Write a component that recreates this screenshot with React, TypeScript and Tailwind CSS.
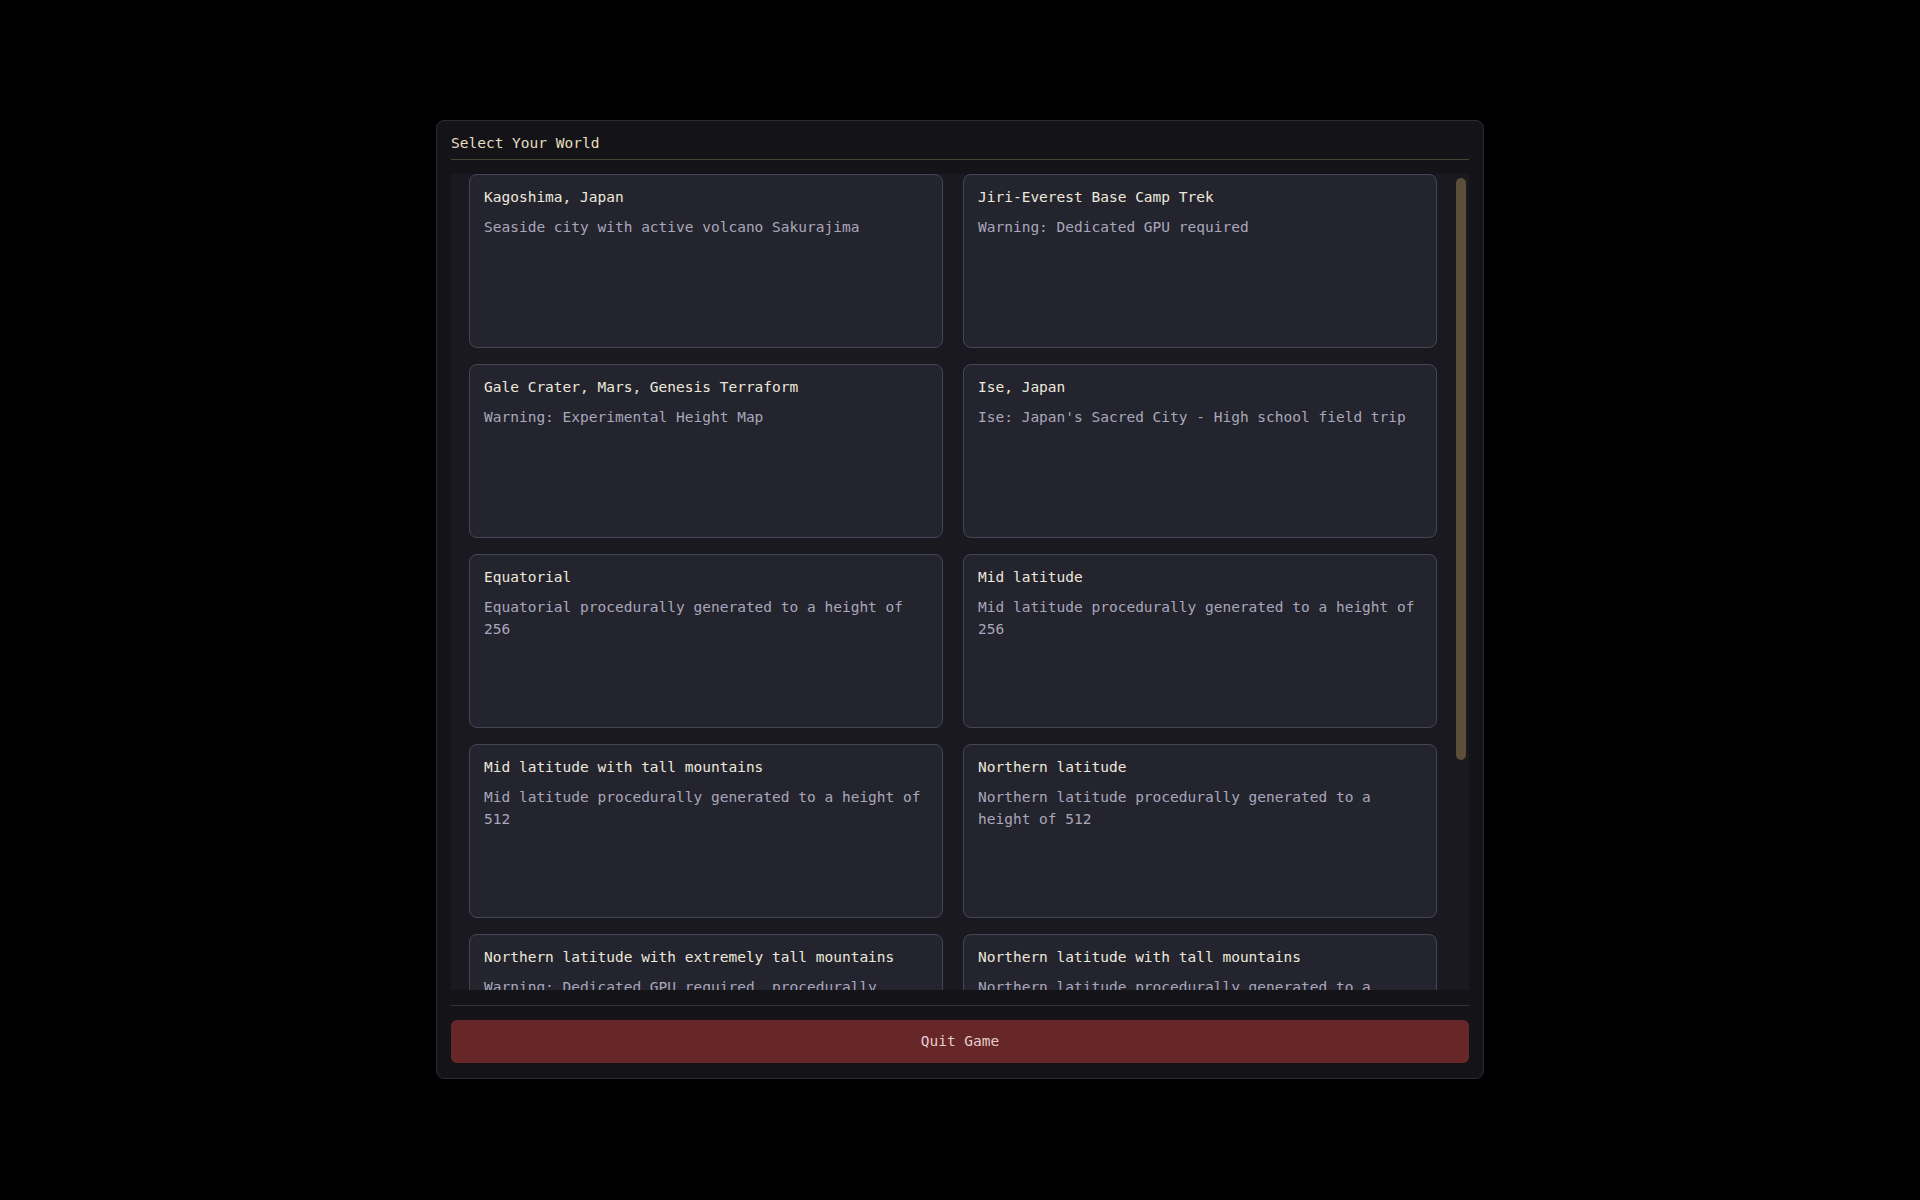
import React from "react";

type World = { name: string; desc: string };

const worlds: World[] = [
  { name: "Kagoshima, Japan", desc: "Seaside city with active volcano Sakurajima" },
  { name: "Jiri-Everest Base Camp Trek", desc: "Warning: Dedicated GPU required" },
  { name: "Gale Crater, Mars, Genesis Terraform", desc: "Warning: Experimental Height Map" },
  { name: "Ise, Japan", desc: "Ise: Japan's Sacred City - High school field trip" },
  { name: "Equatorial", desc: "Equatorial procedurally generated to a height of 256" },
  { name: "Mid latitude", desc: "Mid latitude procedurally generated to a height of 256" },
  { name: "Mid latitude with tall mountains", desc: "Mid latitude procedurally generated to a height of 512" },
  { name: "Northern latitude", desc: "Northern latitude procedurally generated to a height of 512" },
  {
    name: "Northern latitude with extremely tall mountains",
    desc: "Warning: Dedicated GPU required, procedurally generated to a height of 1024",
  },
  {
    name: "Northern latitude with tall mountains",
    desc: "Northern latitude procedurally generated to a height of 768",
  },
];

const mono = { fontFamily: '"DejaVu Sans Mono", "Liberation Mono", monospace' };

function WorldCard({ world }: { world: World }) {
  return (
    <div className="h-[174px] rounded-[8px] border border-[#45455a] bg-[#24242f] px-[14px] pt-[13px]">
      <div className="text-[14.5px] leading-[18px] text-[#ece8da] whitespace-nowrap">{world.name}</div>
      <div className="mt-[10px] text-[14.5px] leading-[22px] text-[#a9a7b9]">{world.desc}</div>
    </div>
  );
}

export default function App() {
  return (
    <div className="w-full h-[1200px] bg-black flex justify-center pt-[120px]" style={mono}>
      <div className="w-[1048px] self-start rounded-[8px] border border-[#2a2a31] bg-[#131318] px-[14px] pt-[13px] pb-[15px]">
        <div className="text-[14.5px] leading-[18px] text-[#e6dfbd]">Select Your World</div>
        <div className="mt-[7px] h-px bg-[#4a4233]" />

        <div className="relative mt-[14px] h-[816px] overflow-hidden bg-[#19191f] pl-[18px] pr-[32px]">
          <div className="grid grid-cols-[474px_474px] gap-x-[20px] gap-y-[16px]">
            {worlds.map((w) => (
              <WorldCard key={w.name} world={w} />
            ))}
          </div>
          <div className="absolute right-[3px] top-[4px] h-[582px] w-[10px] rounded-full bg-[#5b4f39]" />
        </div>

        <div className="mt-[15px] h-px bg-[#38342d]" />

        <button className="mt-[14px] flex h-[43px] w-full items-center justify-center rounded-[6px] bg-[#672627] text-[14.5px] text-[#e3cdcd]">
          Quit Game
        </button>
      </div>
    </div>
  );
}
